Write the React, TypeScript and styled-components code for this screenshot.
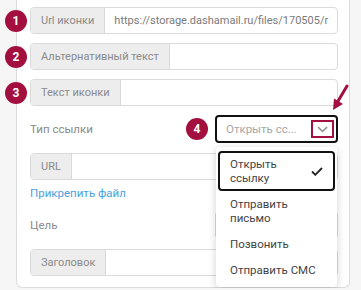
import React from "react";
import styled, { createGlobalStyle } from "styled-components";

const CRIMSON = "#a3103f";

const GlobalStyle = createGlobalStyle`
  html, body {
    margin: 0;
    background: #f6f6f6;
    font-family: Roboto, "Noto Sans", sans-serif;
    font-size: 11px;
  }
  * { box-sizing: border-box; }
`;

interface BadgeProps {
  $left: number;
}

const Badge = styled.span<BadgeProps>`
  position: absolute;
  left: ${(p) => p.$left}px;
  top: 50%;
  width: 22px;
  height: 22px;
  margin-top: -11px;
  border-radius: 50%;
  background: ${CRIMSON};
  color: #fff;
  font-weight: 700;
  font-size: 12px;
  display: flex;
  align-items: center;
  justify-content: center;
  z-index: 2;
`;

const App: React.FC = () => {
  return (
    <>
      <GlobalStyle />
      <Panel>
        <Row $top={0}>
          <Badge $left={-25}>1</Badge>
          <InputGroup>
            <Addon>Url иконки</Addon>
            <Field>https://storage.dashamail.ru/files/170505/r</Field>
          </InputGroup>
        </Row>
        <Row $top={9}>
          <Badge $left={-25}>2</Badge>
          <InputGroup>
            <Addon>Альтернативный текст</Addon>
            <Field />
          </InputGroup>
        </Row>
        <Row $top={9}>
          <Badge $left={-25}>3</Badge>
          <InputGroup>
            <Addon>Текст иконки</Addon>
            <Field />
          </InputGroup>
        </Row>

        <LabelRow $top={9}>
          <Label>Тип ссылки</Label>
          <SelectWrap>
            <Badge $left={-29}>4</Badge>
            <Arrow width="24" height="30" viewBox="0 0 24 30">
              <line x1="19" y1="2" x2="9.5" y2="18" stroke={CRIMSON} strokeWidth="3" strokeLinecap="round" />
              <polygon points="5,26 6,14.5 15,20" fill={CRIMSON} />
            </Arrow>
            <Select $active>
              <SelectText>Открыть сс...</SelectText>
              <ChevronBox>
                <svg width="11" height="7" viewBox="0 0 11 7">
                  <polyline points="1,1 5.5,5.5 10,1" fill="none" stroke="#8c8c8c" strokeWidth="1.5" />
                </svg>
              </ChevronBox>
            </Select>
            <Menu>
              <MenuItem $selected>
                <span>Открыть<br />ссылку</span>
                <svg width="12" height="9" viewBox="0 0 12 9">
                  <polyline points="1,4.5 4.3,7.8 11,1" fill="none" stroke="#222" strokeWidth="1.8" />
                </svg>
              </MenuItem>
              <MenuItem>
                <span>Отправить<br />письмо</span>
              </MenuItem>
              <MenuItem>
                <span>Позвонить</span>
              </MenuItem>
              <MenuItem>
                <span>Отправить СМС</span>
              </MenuItem>
            </Menu>
          </SelectWrap>
        </LabelRow>

        <Row $top={10}>
          <InputGroup>
            <Addon>URL</Addon>
            <Field />
          </InputGroup>
        </Row>

        <Link>Прикрепить файл</Link>

        <LabelRow $top={10}>
          <Label>Цель</Label>
          <SelectWrap>
            <Select />
          </SelectWrap>
        </LabelRow>

        <Row $top={10}>
          <InputGroup>
            <Addon>Заголовок</Addon>
            <Field />
          </InputGroup>
        </Row>
      </Panel>
    </>
  );
};

const Panel = styled.div`
  position: relative;
  margin-left: 16px;
  width: 334px;
  height: 288px;
  background: #fff;
  border: 1px solid #dcdcdc;
  border-top: 0;
  border-radius: 0 0 6px 6px;
  padding: 7px 11px 0 13px;
  display: flex;
  flex-direction: column;
`;

const Row = styled.div<{ $top: number }>`
  position: relative;
  display: flex;
  height: 27px;
  margin-top: ${(p) => p.$top}px;
`;

const InputGroup = styled.div`
  flex: 1;
  min-width: 0;
  display: flex;
  border: 1px solid #dadada;
  border-radius: 4px;
  overflow: hidden;
`;

const Addon = styled.div`
  display: flex;
  align-items: center;
  padding: 0 10px;
  background: #ededed;
  border-right: 1px solid #dadada;
  color: #8a8a8a;
  white-space: nowrap;
`;

const Field = styled.div`
  flex: 1;
  min-width: 0;
  display: flex;
  align-items: center;
  padding: 0 9px;
  color: #7a7a7a;
  white-space: nowrap;
  overflow: hidden;
`;

const LabelRow = styled.div<{ $top: number }>`
  display: flex;
  align-items: center;
  justify-content: space-between;
  height: 28px;
  margin-top: ${(p) => p.$top}px;
`;

const Label = styled.span`
  color: #8a8a8a;
  font-size: 11.5px;
`;

const SelectWrap = styled.div`
  position: relative;
  width: 123px;
  height: 28px;
`;

const Select = styled.div<{ $active?: boolean }>`
  height: 100%;
  display: flex;
  align-items: center;
  justify-content: space-between;
  padding: 0 2px 0 9px;
  border: ${(p) => (p.$active ? "2px solid #111" : "1px solid #dadada")};
  border-radius: 4px;
  background: #fff;
`;

const SelectText = styled.span`
  color: #a6a6a6;
  font-size: 11.5px;
  white-space: nowrap;
`;

const ChevronBox = styled.span`
  width: 23px;
  height: 18px;
  border: 2px solid ${CRIMSON};
  display: flex;
  align-items: center;
  justify-content: center;
`;

const Arrow = styled.svg`
  position: absolute;
  left: 113px;
  top: -31px;
`;

const Menu = styled.div`
  position: absolute;
  top: 32px;
  left: 1px;
  width: 121px;
  padding: 4px 2px;
  background: #fff;
  border-radius: 4px;
  box-shadow: 0 2px 8px rgba(0, 0, 0, 0.18);
  z-index: 3;
`;

const MenuItem = styled.div<{ $selected?: boolean }>`
  display: flex;
  align-items: center;
  justify-content: space-between;
  padding: 4px 10px;
  border: 2px solid ${(p) => (p.$selected ? "#111" : "transparent")};
  border-radius: 4px;
  color: #444;
  font-size: 11.5px;
  line-height: 14px;
  white-space: nowrap;
`;

const Link = styled.span`
  margin-top: 5px;
  line-height: 16px;
  font-size: 11.5px;
  color: #4aa2dc;
`;

export default App;
